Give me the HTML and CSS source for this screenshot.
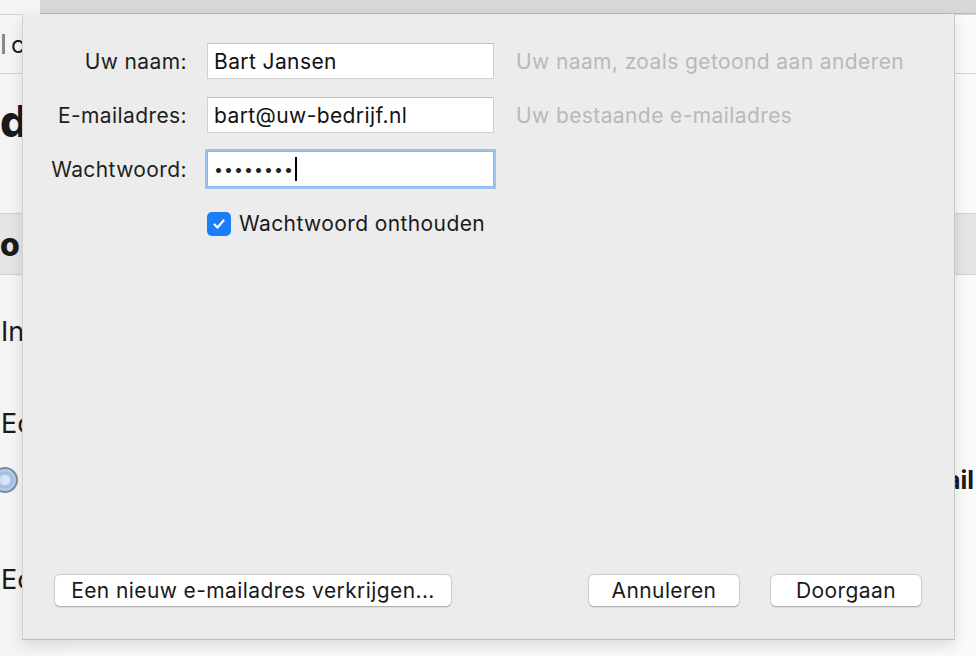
FILE: index.html
```html
<!DOCTYPE html>
<html lang="nl">
<head>
    <meta charset="UTF-8">
    <meta name="viewport" content="width=device-width, initial-scale=1.0">
    <title>Account instellen</title>
    <link rel="stylesheet" href="styles.css">
</head>
<body>
    <div class="window">
        <div class="titlebar">
            <div class="titlebar-left"></div>
            <div class="titlebar-right"></div>
        </div>

        <div class="bg-row bg-search">
            <span class="bg-bar"></span><span>c</span>
        </div>
        <div class="bg-row bg-heading">d</div>
        <div class="bg-row bg-band">o</div>
        <div class="bg-row bg-text bg-in">In</div>
        <div class="bg-row bg-text bg-ec">Ec</div>
        <div class="bg-row bg-radio-row">
            <span class="radio"></span>
            <span class="bg-strong">ail</span>
        </div>
        <div class="bg-row bg-text bg-ec2">Ec</div>
    </div>

    <!-- account sheet over the mail window -->
    <div class="sheet">
        <div class="form">
            <label class="label" for="name">Uw naam:</label>
            <div class="field"><span class="value">Bart Jansen</span></div>
            <div class="hint">Uw naam, zoals getoond aan anderen</div>

            <label class="label" for="mail">E-mailadres:</label>
            <div class="field"><span class="value">bart@uw-bedrijf.nl</span></div>
            <div class="hint">Uw bestaande e-mailadres</div>

            <label class="label" for="pass">Wachtwoord:</label>
            <div class="field focused"><span class="dots">&bull;&bull;&bull;&bull;&bull;&bull;&bull;&bull;</span><span class="caret"></span></div>
            <div class="hint"></div>

            <div></div>
            <div class="remember">
                <span class="checkbox">
                    <svg width="16" height="16" viewBox="0 0 16 16"><path d="M3.5 8.5l3 3 6-7" fill="none" stroke="#fff" stroke-width="2.2" stroke-linecap="round" stroke-linejoin="round"/></svg>
                </span>
                <span>Wachtwoord onthouden</span>
            </div>
        </div>

        <div class="actions">
            <button class="btn btn-wide">Een nieuw e-mailadres verkrijgen...</button>
            <div class="actions-right">
                <button class="btn">Annuleren</button>
                <button class="btn">Doorgaan</button>
            </div>
        </div>
    </div>
</body>
</html>
```

FILE: styles.css
```css
body {
    margin: 0;
    padding: 0;
    width: 976px;
    height: 656px;
    overflow: hidden;
    position: relative;
    font-family: 'Inter', 'Liberation Sans', sans-serif;
    color: #1a1a1a;
    background-color: #f6f6f6;
}

.window {
    display: flex;
    flex-direction: column;
    background: linear-gradient(to right, #f4f4f4, #fafafa 10%);
}

.titlebar {
    display: flex;
    height: 14px;
}

.titlebar-left {
    width: 40px;
    background-color: #f4f4f4;
}

.titlebar-right {
    flex: 1;
    background-color: #d7d7d7;
    border-bottom: 1px solid #b9b9b9;
}

.bg-row {
    display: flex;
    align-items: center;
    justify-content: space-between;
    overflow: hidden;
    white-space: nowrap;
    box-sizing: border-box;
}

.bg-search {
    height: 60px;
    justify-content: flex-start;
    font-size: 24px;
    border-top: 1px solid #d4d4d4;
    border-bottom: 1px solid #d4d4d4;
}

.bg-bar {
    width: 3px;
    height: 20px;
    margin: 0 6px 0 2px;
    background-color: #888;
}

.bg-heading {
    height: 139px;
    font-size: 44px;
    font-weight: 800;
    padding-bottom: 46px;
}

.bg-band {
    height: 62px;
    font-size: 32px;
    font-weight: 800;
    background-color: #e5e5e5;
    border-top: 1px solid #d0d0d0;
    border-bottom: 1px solid #d0d0d0;
}

.bg-text {
    font-size: 27px;
    padding-left: 1px;
}

.bg-in {
    height: 112px;
}

.bg-ec {
    height: 72px;
}

.bg-radio-row {
    height: 42px;
}

.radio {
    width: 26px;
    height: 26px;
    margin-left: -8px;
    border-radius: 50%;
    box-sizing: border-box;
    border: 2px solid #7a8da8;
    background: radial-gradient(circle, #d6e6f6 0 25%, #9cbbe0 45%, #b9d1ec 65%, #7f9fca 100%);
}

.bg-strong {
    font-size: 25px;
    font-weight: 700;
    padding-right: 2px;
}

.bg-ec2 {
    height: 156px;
}

.sheet {
    position: absolute;
    left: 22px;
    top: 14px;
    width: 933px;
    height: 626px;
    box-sizing: border-box;
    display: flex;
    flex-direction: column;
    justify-content: space-between;
    padding: 29px 32px 32px 0;
    background-color: #ececec;
    border-left: 1px solid #d2d2d2;
    border-right: 1px solid #c9c9c9;
    border-bottom: 1px solid #bdbdbd;
    box-shadow: 0 6px 14px rgba(0, 0, 0, 0.12);
}

.form {
    display: grid;
    grid-template-columns: 164px 287px 1fr;
    column-gap: 20px;
    row-gap: 18px;
    align-items: center;
    font-size: 21px;
    letter-spacing: 0.4px;
}

.label {
    text-align: right;
    color: #1e1e1e;
}

.field {
    height: 36px;
    box-sizing: border-box;
    display: flex;
    align-items: center;
    padding: 0 6px;
    background-color: #fff;
    border: 1px solid #cfcfcf;
    border-top-color: #c2c2c2;
}

.field.focused {
    border: 1px solid #8db8ea;
    box-shadow: 0 0 0 2px #9cc3f0;
}

.value {
    color: #111;
}

.dots {
    font-size: 16px;
    letter-spacing: 1px;
    color: #222;
}

.caret {
    width: 2px;
    height: 24px;
    margin-left: 1px;
    background-color: #000;
}

.hint {
    color: #b9b9b9;
    padding-left: 2px;
}

.remember {
    display: flex;
    align-items: center;
    gap: 8px;
    margin-top: 6px;
}

.checkbox {
    width: 24px;
    height: 24px;
    border-radius: 5px;
    background-color: #1c7ef6;
    display: flex;
    align-items: center;
    justify-content: center;
}

.actions {
    display: flex;
    justify-content: space-between;
    padding-left: 31px;
}

.actions-right {
    display: flex;
    gap: 30px;
}

.btn {
    width: 152px;
    height: 33px;
    font-family: inherit;
    font-size: 21px;
    letter-spacing: 0.4px;
    color: #1a1a1a;
    background-color: #fff;
    border: 1px solid #cdcdcd;
    border-bottom-color: #b5b5b5;
    border-radius: 6px;
    box-shadow: 0 1px 1px rgba(0, 0, 0, 0.08);
    padding: 0;
}

.btn-wide {
    width: 398px;
}
```
